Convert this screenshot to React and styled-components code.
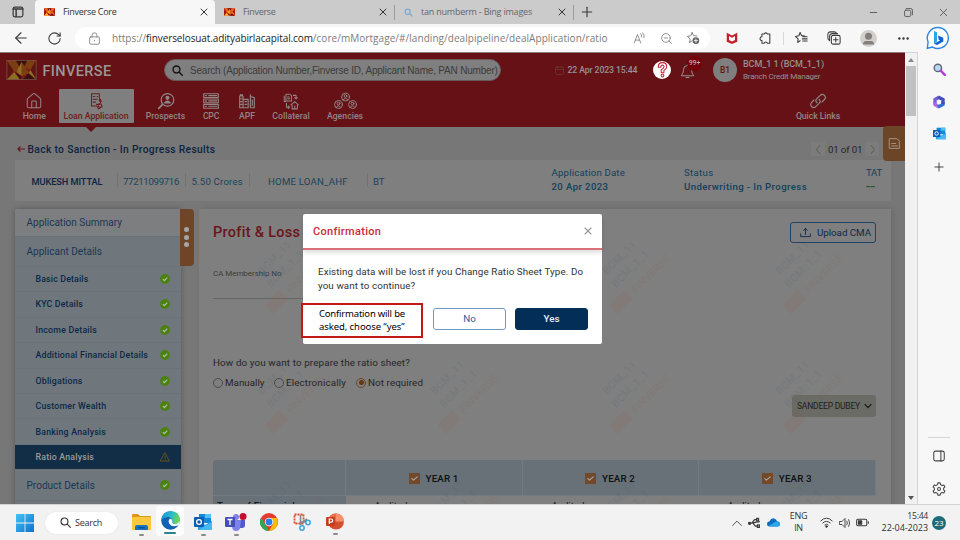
import React from 'react';
import styled, { createGlobalStyle, css } from 'styled-components';
import {
  LuArrowLeft, LuRotateCw, LuZoomOut, LuPlus, LuX, LuMinus, LuHouse,
} from 'react-icons/lu';

const rubik = 'Roboto, "Open Sans", sans-serif';
const segoe = '"Open Sans", "Noto Sans", sans-serif';

const GlobalStyle = createGlobalStyle`
  * { box-sizing: border-box; }
  body { margin: 0; font-family: ${rubik}; overflow: hidden; }
  svg { display: block; flex: none; }
`;

const type = css`
  font-size: ${p => p.$size || 9.6}px;
  letter-spacing: ${p => p.$ls || 0}px;
  white-space: nowrap;
`;

const Screen = styled.div`
  width: 960px; height: 540px; display: flex; flex-direction: column; overflow: hidden; background: #f7f7f7;
`;

/* Browser chrome */
const TabStrip = styled.div`
  height: 24px; flex: none; display: flex; background: #cbcbcb; color: #5a5a5a; font-family: ${segoe};
`;
const Cell = styled.div`
  width: ${p => p.$w}px; flex: none; display: flex; align-items: center; justify-content: center; color: ${p => p.$c || '#3b3b3b'};
`;
const Tab = styled.div`
  width: ${p => p.$w || 179}px; display: flex; align-items: center; padding: 0 5px 0 9px; gap: 8px;
  background: ${p => (p.$active ? '#f7f7f7' : 'transparent')};
  color: ${p => (p.$active ? '#333' : '#666')};
  border-radius: 4px 4px 0 0;
`;
const TabTitle = styled.span`${type} flex: 1; line-height: 24px;`;
const TabRule = styled.i`width: 1px; height: 15px; margin-top: 5px; background: #9b9b9b;`;
const Spring = styled.div`flex: 1;`;
const Toolbar = styled.div`height: 28px; flex: none; display: flex; align-items: center; color: #3b3b3b;`;
const Address = styled.div`
  width: 635px; height: 22.5px; margin-left: 9px; border-radius: 12px; background: #fff;
  display: flex; align-items: center; padding-left: 13px; font-family: ${segoe};
`;
const Url = styled.span`${type} color: ${p => (p.$host ? '#222' : '#7c7c7c')}; line-height: 20px;`;
const UrlBox = styled.div`display: flex; width: 513px; margin-left: 11px;`;
const ToolRule = styled.i`width: 1px; height: 13px; background: #d8d8d8;`;
const Avatar = styled.div`
  width: 17px; height: 17px; border-radius: 50%; background: #d3d0cc; overflow: hidden;
`;

const Middle = styled.div`height: 452px; flex: none; display: flex;`;
const Viewport = styled.div`
  position: relative; width: 905px; height: 452px; overflow: hidden; background: #777;
  border-top: 1px solid #8d7b7c; display: flex; flex-direction: column;
`;
const Scroll = styled.div`
  width: 13px; background: #f1f1f1; border-right: 1px solid #d5d5d5; border-top: 1px solid #d5d5d5;
  display: flex; flex-direction: column; align-items: center; padding: 5px 0 4px;
`;
const Thumb = styled.div`width: 10px; height: 50px; margin-top: 4px; background: #c1c1c1;`;
const SideRail = styled.div`width: 42px; display: flex; flex-direction: column; align-items: center; color: #444;`;
const RailItem = styled.div`height: ${p => p.$h}px; display: flex; align-items: center; justify-content: center;`;
const RailRule = styled.i`width: 22px; height: 1px; background: #d5d5d5;`;

/* App header */
const Header = styled.header`height: 74px; flex: none; background: #651115; color: #979191; display: flex; flex-direction: column;`;
const HeaderTop = styled.div`height: 33px; display: flex; align-items: center; padding-left: 6px;`;
const Brand = styled.span`${type} font-weight: 500; width: 121px; margin-left: 5.5px; padding-top: 3px; color: #9b9797;`;
const SearchBox = styled.div`
  width: 337px; height: 22px; margin-top: 1px; border-radius: 11px; background: #7f7f7f; border: 1px solid #6a5a5b; display: flex; align-items: center;
  padding-left: 7px; gap: 7.5px; color: #3c3c3c; font-family: "Liberation Sans", Arial, sans-serif;
`;
const Plain = styled.span`${type} font-weight: ${p => p.$bold ? 500 : 400};`;
const DateBox = styled.div`display: flex; align-items: center; gap: 4px; margin-left: 54px; width: 98.5px; padding-top: 1px;`;
const Help = styled.div`width: 18px; height: 18px; border-radius: 50%; background: #fff; display: flex; align-items: center; justify-content: center;`;
const Bell = styled.div`position: relative; margin-left: 9px; width: 33px;`;
const BellCount = styled.span`
  position: absolute; left: 7px; top: -5px; width: 15px; height: 15px; border-radius: 50%; background: #760009; color: #aaa;
  font-size: 7px; line-height: 14px; text-align: center; font-weight: 500; letter-spacing: -.1px;
`;
const UserDot = styled.div`
  width: 24px; height: 24px; border-radius: 50%; background: #7f7f7f; color: #651115; font-size: 8.5px; font-weight: 500;
  display: flex; align-items: center; justify-content: center;
`;
const UserText = styled.div`display: flex; flex-direction: column; margin-left: 6px; gap: 1px; line-height: 11px; padding-top: 1.5px;`;
const Nav = styled.nav`height: 41px; display: flex; padding: 3px 0 4px 10px;`;
const NavItem = styled.div`
  width: ${p => p.$w}px; display: flex; flex-direction: column; align-items: center; padding-top: 2.5px; position: relative;
  background: ${p => (p.$on ? '#7f7f7f' : 'transparent')}; color: ${p => (p.$on ? '#6c1d21' : '#918585')};
  border-radius: 1px;
`;
const NavLabel = styled.span`${type} font-weight: 500; line-height: 12px; margin-top: .5px;`;
const Pointer = styled.i`
  position: absolute; top: 37.5px; left: 27px; border: 5px solid transparent; border-top-color: #651115; border-bottom: 0;
`;

/* Deal summary */
const BackRow = styled.div`
  height: 33px; flex: none; display: flex; align-items: center; padding: 11px 0 0 17px; color: #0f2440;
`;
const BackText = styled(Plain)`flex: 1; margin-left: 2.5px;`;
const Pager = styled.div`display: flex; align-items: center; gap: 3px; width: 68px; margin-right: 26px; color: #262626;`;
const PagerButton = styled.i`width: 14px; height: 14px; flex: none; background: #7c7c7c; display: flex; align-items: center; justify-content: center;`;
const InfoCard = styled.div`
  width: 876px; height: 41px; flex: none; margin-left: 14.5px; background: #7f7f7f; display: flex; align-items: center; color: #1a445e;
`;
const InfoCell = styled.div`
  width: ${p => p.$w}px; height: 14px; line-height: 13px; padding-left: ${p => p.$pad || 0}px; margin-top: -2px;
  border-left: 1px solid ${p => (p.$rule ? '#727272' : 'transparent')}; color: ${p => p.$c || 'inherit'};
`;
const InfoPair = styled.div`width: ${p => p.$w}px; display: flex; flex-direction: column; gap: 1px; line-height: 13px; margin-top: -2px; color: #123f5c;`;
const Good = styled.b`color: #2b5425; font-weight: 400; line-height: 13px;`;

const Columns = styled.div`flex: 1; display: flex; align-items: flex-start; padding: 7.5px 0 0 14.5px;`;
const Menu = styled.div`width: 166px; height: 320px; flex: none; box-shadow: 0 0 6px rgba(0,0,0,.25); background: #6f757a;`;
const MenuRow = styled.div`
  height: ${p => p.$h || 25.45}px; display: flex; align-items: center; justify-content: space-between;
  padding: 0 11px 0 ${p => (p.$sub ? 21 : 12)}px; border-bottom: 1px solid #6b7378;
  background: ${p => (p.$on ? '#112e46' : p.$top ? '#7d7e7f' : '#70777c')};
  color: ${p => (p.$on ? '#9a9a9a' : p.$sub ? '#0d2848' : '#1a3655')};
`;
const Handle = styled.div`
  width: 14.5px; height: 57px; flex: none; background: #6e4527; border-radius: 0 4px 4px 0; margin-left: -1px;
  display: flex; flex-direction: column; align-items: center; justify-content: center; gap: 2.5px;
`;
const Dot = styled.i`width: 5px; height: 5px; border-radius: 50%; background: #a6a6a6;`;
const Card = styled.main`
  width: 692px; height: 320px; margin-left: 4.5px; background: #7f7f7f; box-shadow: 2px 0 6px rgba(0,0,0,.12);
  padding: 13.5px 14.5px 0; display: flex; flex-direction: column; color: #262626;
`;
const TitleRow = styled.div`height: 21px; flex: none; display: flex; justify-content: space-between; align-items: center; color: #6b141b;`;
const Upload = styled.div`
  width: 86px; height: 21px; border: 1px solid #1f4265; border-radius: 3px; color: #10294a;
  display: flex; align-items: center; padding-left: 9px; gap: 6px;
`;
const Field = styled.div`width: 150px; height: 35px; flex: none; margin-top: 21px; line-height: 12px; padding-top: 1px; border-bottom: 1px solid #656565; color: #3d3d3d;`;
const Question = styled.div`margin-top: 55px; height: 14px; flex: none; line-height: 14px;`;
const Radios = styled.div`display: flex; margin-top: 7.5px; height: 14px; flex: none; line-height: 14px;`;
const RadioItem = styled.div`width: ${p => p.$w}px; display: flex; align-items: center; gap: 2px;`;
const Ring = styled.i`
  width: 10px; height: 10px; border-radius: 50%; border: 1px solid ${p => (p.$on ? '#6b482c' : '#4c4c4c')};
  display: flex; align-items: center; justify-content: center;
  &::after { content: ''; width: 5px; height: 5px; border-radius: 50%; background: ${p => (p.$on ? '#65380f' : 'transparent')}; }
`;
const Select = styled.div`
  width: 84px; height: 22px; flex: none; margin-top: 5px; align-self: flex-end; border-radius: 3px; background: #6b6b65; color: #202020;
  display: flex; align-items: center; justify-content: space-between; padding: 0 4px 0 5px;
`;
const Table = styled.div`
  margin-top: 43px; height: 76px; flex: none; display: grid; grid-template-columns: 132.5px 177px 176px 1fr; grid-template-rows: 36px 40px; border-radius: 3px 3px 0 0; overflow: hidden;
`;
const Th = styled.div`
  background: #687178; border-right: 1px solid #747b80; border-bottom: 1px solid #747b80; color: #101010;
  display: flex; align-items: center; justify-content: center; gap: 6px; font-weight: 500; padding-top: 2px;
`;
const Check = styled.i`width: 11px; height: 11px; background: #74492a; display: flex; align-items: center; justify-content: center;`;
const Td = styled.div`
  ${type} padding: 4px 0 0 ${p => (p.$head ? 4 : 29)}px; line-height: 12px; color: #181818;
  background: ${p => (p.$head ? '#687178' : '#7f7f7f')}; font-weight: ${p => (p.$head ? 500 : 400)};
`;
const NotesTab = styled.div`
  position: absolute; right: 0; top: 73px; width: 22px; height: 35px; border-radius: 4px 0 0 4px; background: #6c4527;
  display: flex; align-items: center; justify-content: center;
`;
const Watermarks = styled.div`
  position: absolute; left: 250px; top: 185px; display: grid; grid-template-columns: repeat(4, 172.7px); grid-auto-rows: 120px;
  opacity: .09; pointer-events: none;
`;

/* Confirmation dialog */
const Modal = styled.div`
  position: absolute; left: 303px; top: 161px; width: 299px; height: 129.5px; background: #fff; border-radius: 2px; color: #333;
`;
const ModalHead = styled.div`
  height: 36px; display: flex; align-items: center; justify-content: space-between; padding: 0 8px 0 10px; color: #cb2a35;
  box-shadow: 0 3px 4px rgba(0,0,0,.12); border-bottom: 2px solid #dc7078;
`;
const ModalText = styled.p`${type} margin: 15px 0 0 15px; line-height: 14.3px;`;
const Actions = styled.div`display: flex; gap: 9px; padding: 14px 0 0 130px;`;
const Button = styled.button`
  width: 73px; height: 22px; border-radius: 3px; padding: 0 0 1px; font-family: inherit; font-size: 9.8px; letter-spacing: 0;
  border: 1px solid ${p => (p.$primary ? '#022e57' : '#6f9ac4')}; background: ${p => (p.$primary ? '#022e57' : '#fff')};
  color: ${p => (p.$primary ? '#e8eef4' : '#2c5e97')}; font-weight: ${p => (p.$primary ? 500 : 400)};
`;
const Callout = styled.div`
  position: absolute; left: -2px; top: 89px; width: 122px; height: 35px; border: 2px solid #c21818; background: #fff; color: #000;
  display: flex; flex-direction: column; justify-content: center; padding-left: 16px; line-height: 12.3px; font-family: "Noto Sans", "Open Sans", sans-serif;
`;

/* Taskbar */
const Taskbar = styled.footer`height: 36px; flex: none; background: #f2f2f2; border-top: 1px solid #d2d2d2; display: flex; align-items: center; padding-left: 4px; font-family: ${segoe}; color: #333;`;
const SearchPill = styled.div`width: 73px; height: 22px; border-radius: 11px; background: #fff; box-shadow: 0 0 1px #ccc; display: flex; align-items: center; gap: 4px; padding-left: 15px; margin-right: 5px;`;
const TaskItem = styled.div`
  width: ${p => p.$w || 33}px; height: 35px; display: flex; flex-direction: column; align-items: center; padding-top: 8px; gap: 3px;
`;
const ActiveTask = styled.div`
  width: 28px; height: 30px; margin: 1px 2.5px 0 1px; border-radius: 3px; background: #fcfcfc; display: flex; flex-direction: column; align-items: center; padding-top: 5px; gap: 2px;
`;
const Running = styled.i`width: ${p => (p.$wide ? 12 : 5)}px; height: 2px; border-radius: 1px; background: ${p => (p.$wide ? '#2b8391' : '#8b8b8b')};`;
const Stack = styled.div`width: ${p => p.$w}px; display: flex; flex-direction: column; line-height: 12px; align-items: ${p => p.$align || 'center'}; margin-top: -1px;`;
const Count = styled.div`width: 14px; height: 14px; margin-left: 4px; border-radius: 50%; background: #1d6b7a; color: #fff; font-size: 8px; display: flex; align-items: center; justify-content: center;`;
const PinnedApps = styled.div`display: flex; margin-left: 4px;`;

const S = ({ w = 16, h = w, vb = '0 0 16 16', sw = 1, children }) => (
  <svg width={w} height={h} viewBox={vb} fill="none" stroke="currentColor" strokeWidth={sw} strokeLinecap="round" strokeLinejoin="round">{children}</svg>
);

const Logo = ({ w = 30, h = 20, dim }) => {
  const c = dim ? ['#5b1410', '#7b3d12', '#8b6d24', '#7c1c12', '#3b0f0d'] : ['#a51712', '#e5601c', '#f8b52c', '#cf2817', '#741009'];
  return (
    <svg width={w} height={h} viewBox="0 0 30 20" stroke="none">
      <rect width="30" height="20" fill={c[3]} />
      <path d="M0 0L8 9L0 20Z" fill={c[0]} />
      <path d="M0 0H9L15 10L8 12Z" fill={c[1]} />
      <path d="M9 0H21L15 10Z" fill={c[4]} />
      <path d="M15 2L22 13L15 16L10 12Z" fill={c[2]} />
      <path d="M15 2V16L22 13Z" fill={c[1]} />
      <path d="M21 0H30L24 10L18 7Z" fill={c[1]} />
      <path d="M30 0V20L24 10Z" fill={c[0]} />
      <path d="M0 20L8 12L14 20Z" fill={c[2]} />
      <path d="M8 12L15 16L14 20Z" fill={c[4]} />
      <path d="M16 20L22 13L30 20Z" fill={c[4]} />
      <path d="M22 13L24 10L30 20Z" fill={c[2]} />
      {dim && <rect x=".4" y=".4" width="29.2" height="19.2" fill="none" stroke="#75504b" strokeWidth=".8" />}
    </svg>
  );
};

const Bing = () => (
  <svg width="24" height="24" viewBox="0 0 24 24" fill="none">
    <path d="M12 1.5a10.5 10.5 0 1 1-5.4 19.6L1.3 22.3L2.1 16A10.5 10.5 0 0 1 12 1.5Z" fill="#fff" stroke="#2f86e0" strokeWidth="1.4" />
    <path d="M8 5l3 1.2v9.3l-3 2.6Z" fill="#2aa5ea" />
    <path d="M12 9.4l5.3 2.4v3.6L11 19l-3-1.2 6-3.3-1.3-.8Z" fill="#1462d2" />
  </svg>
);
const Done = () => (
  <svg width="10" height="10" viewBox="0 0 10 10" fill="none"><circle cx="5" cy="5" r="4.9" fill="#4b820f" /><path d="M2.9 5.1L4.4 6.6L7.2 3.6" stroke="#b4b9ac" strokeWidth="1.3" /></svg>
);
const Star = () => <path d="M7 1.8L8.6 5.3L12.4 5.7M4.2 13l.5-4L1.6 6.2l3.9-.8L7 1.8M4.2 13L7 11.2" />;
const Person = ({ x, y, r = 3.2 }) => <g transform={`translate(${x} ${y})`}><circle r={r} /><circle cy={-r * .25} r={r * .35} /><path d={`M${-r * .6} ${r * .75}Q0 ${-r * .2} ${r * .6} ${r * .75}`} /></g>;

const navItems = [
  ['Home', 48.5, -.1, <LuHouse size={18} strokeWidth={1.4} />],
  ['Loan Application', 75, -.02, <S w={18} sw={.9}><path d="M4 1.500h7v6M4 1.500v11h4.500M5.500 4h1.500M9 4h.5M5.500 6.500h3.500M5.500 9h2M8.500 11h3M9 13l1.500 2 3-2M12 10V6.500M11 8h2" /><circle cx="11.500" cy="12" r="1.600" /></S>],
  ['Prospects', 64, 0, <S w={18} sw={1.1}><circle cx="9.300" cy="7" r="5.600" /><path d="M5 11L1.500 14.500" strokeWidth="1.600" /><path d="M6.800 9.700Q9.300 6.500 11.800 9.700Z" fill="currentColor" /><circle cx="9.300" cy="5.200" r="1.300" fill="currentColor" /></S>],
  ['CPC', 27, -.25, <S w={18} sw={1}><path d="M1.500 1.500h13v3.400h-13ZM1.500 6.200h13v3.400h-13ZM1.500 11h13v3.400h-13ZM3 3.200h1M6 3.200h7M3 7.900h1M6 7.900h7M3 12.700h1M6 12.700h7" /></S>],
  ['APF', 45, 0, <S w={18} sw={1}><path d="M1.500 14V3.500h3V14ZM4.500 14V6.500h4.500v7.500ZM11 14V4l3.500 1v9ZM2 3.500v-1h2v1M2.500 6h1M2.500 8.500h1M2.500 11h1M6.200 8.500h1.400M6.200 11h1.400M12.700 7v5M11 4V2.500" /></S>],
  ['Collateral', 43, .02, <S w={18} sw={.9}><path d="M3.500 2h3.500l1.500 1.500V8h-5ZM2 3.500v5h1.500M5 4.500h1.500M5 6h2M10 3h2.500v3M11.300 5l1.200 1.200L13.700 5M4 10v3.500h2.500M5.500 12.300l1.200 1.200-1.200 1.200M8 11.500l3.300-3 3.200 3M9 11.500V15h4.700v-3.500M11.300 12.500V15" /></S>],
  ['Agencies', 65, .02, <S w={25} h={18} vb="0 0 25 18" sw={1}><Person x={12.5} y={5} r={3.9} /><Person x={5.5} y={12.500} r={3.9} /><Person x={19.5} y={12.500} r={3.9} /></S>],
];

const menu = [
  ['Basic Details', .15], ['KYC Details', .15], ['Income Details', .2], ['Additional Financial Details', .2],
  ['Obligations', .2], ['Customer Wealth', .2], ['Banking Analysis', .2], ['Ratio Analysis', .19],
];

const WatermarkCell = () => (
  <svg width="90" height="90" viewBox="0 0 90 90" fontSize="10.5" fill="#24406b">
    <text transform="translate(12 37) rotate(-45)" letterSpacing=".6">BCM_11</text>
    <text transform="translate(21 50) rotate(-45)" letterSpacing=".6">BCM_1_1</text>
    <g fill="#a03c33">
      <text transform="translate(41 56) rotate(-45)" letterSpacing=".3">FINVERSE</text>
      <path d="M15 67L29 52L38 61L23 76Z" fill="#a0522d" />
    </g>
  </svg>
);

function BrowserTop() {
  return (
    <>
      <TabStrip>
        <Cell $w={35}><S w={12} sw={1.6}><rect x="1.5" y="1.5" width="13" height="13" rx="2.5" /><path d="M1.5 4h13M5.5 4v10" strokeWidth="2" /></S></Cell>
        <Tab $active $w={180}><Logo w={11} h={8} /><TabTitle $size={9} $ls={-.28}>Finverse Core</TabTitle><LuX size={12} color="#333" /></Tab>
        <Tab><Logo w={11} h={8} /><TabTitle $size={9} $ls={-.31}>Finverse</TabTitle><LuX size={12} color="#333" /></Tab>
        <TabRule />
        <Tab $w={178}><S w={9} sw={2}><g stroke="#78a8d0"><circle cx="6.5" cy="6.5" r="4.5" /><path d="M10 10l4.5 4.5" /></g></S><TabTitle $size={9} $ls={-.21}>tan numberm - Bing images</TabTitle><LuX size={12} color="#333" /></Tab>
        <TabRule />
        <Cell $w={26}><LuPlus size={16} strokeWidth={1.7} /></Cell>
        <Spring />
        <Cell $w={34} $c="#555"><LuMinus size={11} /></Cell>
        <Cell $w={36} $c="#555"><S w={9} sw={1.6}><rect x="1" y="4" width="11" height="11" rx="2" /><path d="M4 1h8q3 0 3 3v8" /></S></Cell>
        <Cell $w={34} $c="#555"><LuX size={13} strokeWidth={1.6} /></Cell>
      </TabStrip>
      <Toolbar>
        <Cell $w={42}><LuArrowLeft size={18} strokeWidth={1.5} /></Cell>
        <Cell $w={24}><LuRotateCw size={15} strokeWidth={1.7} /></Cell>
        <Address>
          <S w={13} sw={1}><g stroke="#777"><rect x="2" y="6" width="12" height="9" rx="1.5" /><path d="M5 6V4a3 3 0 0 1 6 0v2M8 10v1" /></g></S>
          <UrlBox>
            <Url $size={10}>https://</Url>
            <Url $size={10} $ls={-.11} $host>finverselosuat.adityabirlacapital.com</Url>
            <Url $size={10} $ls={.05}>/core/mMortgage/#/landing/dealpipeline/dealApplication/ratio</Url>
          </UrlBox>
          <Cell $w={28} $c="#7c7c7c"><S w={13} sw={1}><path d="M1.5 13.5L5.5 3l4 10.5M3 10h5M9.5 2q1.5 1.5 1 4M12 1q2.5 2.5 1.5 6" /></S></Cell>
          <Cell $w={26} $c="#8a8a8a"><LuZoomOut size={13} strokeWidth={1.7} /></Cell>
          <Cell $w={28} $c="#777"><S w={14}><Star /><circle cx="11.3" cy="11" r="3.8" fill="#666" stroke="none" /><path d="M11.3 9.2v3.6M9.5 11h3.6" stroke="#fff" /></S></Cell>
        </Address>
        <Cell $w={44}><S w={12} sw={0}><path d="M1 1l7 3.7L15 1v12l-7 3-7-3Z" fill="#c3202c" /><path d="M4 5.3l4 2.2 4-2.2v5.5l-4 1.8-4-1.8Z" fill="#f7f7f7" /></S></Cell>
        <Cell $w={22}><S w={14} sw={1.2}><path d="M4.500 3.500H7a2 2 0 0 1 3.800 0H13.500V14H10.800a2 2 0 0 0-3.800 0H4.500v-3a2.200 2.200 0 0 1 0-4.400Z" /></S></Cell>
        <Cell $w={14}><ToolRule /></Cell>
        <Cell $w={22}><S w={14} sw={1.2}><Star /><path d="M10 6.5h5M9.5 9h5.5M10 11.5h5" /></S></Cell>
        <Cell $w={44}><S w={14} sw={1.2}><rect x="5" y="5" width="10" height="10" rx="2" /><path d="M10 7.5v5M7.5 10h5M3 11Q1 10 1 8V4q0-3 3-3h4q2.500 0 3 2M3 11V6q0-3 3-3h6" /></S></Cell>
        <Cell $w={24}><Avatar><svg width="17" height="17" viewBox="0 0 17 17"><circle cx="8.500" cy="6.200" r="3.500" fill="#827f7c" /><path d="M3 14.500q0-3.500 3-3.500h5q3 0 3 3.500Z" fill="#827f7c" /></svg></Avatar></Cell>
        <Cell $w={46}><S w={11} sw={0}><g fill="#333"><circle cx="2" cy="8" r="1.700" /><circle cx="8" cy="8" r="1.700" /><circle cx="14" cy="8" r="1.700" /></g></S></Cell>
        <Cell $w={24}><Bing /></Cell>
      </Toolbar>
    </>
  );
}

function AppHeader() {
  return (
    <Header>
      <HeaderTop>
        <Logo w={31} h={20} dim />
        <Brand $size={14.5} $ls={.37}>FINVERSE</Brand>
        <SearchBox>
          <S w={11} sw={2}><g stroke="#111"><circle cx="6.500" cy="6.500" r="5" /><path d="M10.500 10.500L15 15" /></g></S>
          <Plain $size={10} $ls={-.2}>Search (Application Number,Finverse ID, Applicant Name, PAN Number)</Plain>
        </SearchBox>
        <DateBox>
          <S w={9} sw={1.3}><g stroke="#713a31"><rect x="1" y="2" width="14" height="13" rx="2" /><path d="M1 6h14M5 .5v3M11 .5v3" /></g></S>
          <Plain $size={8.7} $ls={-.11} $bold>22 Apr 2023 15:44</Plain>
        </DateBox>
        <Help><S w={17} sw={1}><g stroke="#c52532"><path d="M4 5.800Q4 1.500 8 1.500T12 5.500Q12 7.500 9.300 9v2H6.800V8.200Q9.500 6.700 9.500 5.400T8 3.900T6.400 5.800Z" /><circle cx="8" cy="13.700" r="1.300" /></g></S></Help>
        <Bell>
          <S w={15} h={18} vb="0 0 15 18" sw={1}><path d="M1.500 14.500Q3.500 12.500 3.500 8.500q0-4 4-4t4 4q0 4 2 6ZM6 16.500h3M7.500 4.500v-2" /></S>
          <BellCount>99+</BellCount>
        </Bell>
        <UserDot>B1</UserDot>
        <UserText><Plain $size={9} $bold $ls={-.07}>BCM_1 1 (BCM_1_1)</Plain><Plain $size={8} $ls={-.2}>Branch Credit Manager</Plain></UserText>
      </HeaderTop>
      <Nav>
        {navItems.map(([label, w, ls, icon], i) => (
          <NavItem key={label} $w={w} $on={i === 1}>{icon}<NavLabel $size={8.7} $ls={ls}>{label}</NavLabel>{i === 1 && <Pointer />}</NavItem>
        ))}
        <Spring />
        <NavItem $w={174}><S w={18} sw={1.100}><path d="M7 9.500a2.600 2.600 0 0 1 0-3.600L10 3a2.600 2.600 0 0 1 3.700 3.700L11.500 9M9 6.500a2.600 2.600 0 0 1 0 3.600L6 13a2.600 2.600 0 0 1-3.700-3.700L4.500 7" /></S><NavLabel $size={8.800} $ls={-.12}>Quick Links</NavLabel></NavItem>
      </Nav>
    </Header>
  );
}

function DealSummary() {
  return (
    <>
      <BackRow>
        <S w={8} h={6} vb="0 0 8 6" sw={1.200}><path d="M7.500 3H1M3 1L1 3l2 2" stroke="#6b141b" /></S>
        <BackText $size={10.300} $ls={.32} $bold>Back to Sanction - In Progress Results</BackText>
        <Pager>
          <PagerButton><S w={11} sw={1.300}><path d="M10 2L5 8l5 6" stroke="#55583f" /></S></PagerButton>
          <Plain $size={9.700} $ls={-.15}>01 of 01</Plain>
          <PagerButton><S w={11} sw={1.300}><path d="M6 2l5 6-5 6" stroke="#55583f" /></S></PagerButton>
        </Pager>
      </BackRow>
      <InfoCard>
        <InfoCell $w={102} $pad={16} $c="#0d2444"><Plain $size={9.200} $bold $ls={-.07}>MUKESH MITTAL</Plain></InfoCell>
        <InfoCell $w={68.500} $pad={5.500} $rule><Plain $size={9.600} $ls={-.3}>77211099716</Plain></InfoCell>
        <InfoCell $w={64} $pad={5.500} $rule><Plain $ls={.2}>5.50 Crores</Plain></InfoCell>
        <InfoCell $w={117.500} $pad={18} $rule><Plain $ls={.22}>HOME LOAN_AHF</Plain></InfoCell>
        <InfoCell $w={185} $pad={5.500} $rule><Plain>BT</Plain></InfoCell>
        <InfoPair $w={132.500}><Plain $ls={.2}>Application Date</Plain><Plain $bold $ls={.4}>20 Apr 2023</Plain></InfoPair>
        <InfoPair $w={182}><Plain $ls={.34}>Status</Plain><Plain $bold $ls={.42}>Underwriting - In Progress</Plain></InfoPair>
        <InfoPair $w={20}><Plain $ls={-.3}>TAT</Plain><Good>--</Good></InfoPair>
      </InfoCard>
    </>
  );
}

function SideMenu() {
  return (
    <Menu>
      <MenuRow $h={28} $top><Plain $size={10} $ls={.01}>Application Summary</Plain></MenuRow>
      <MenuRow $h={30.300}><Plain $size={10} $ls={.02}>Applicant Details</Plain></MenuRow>
      {menu.map(([t, ls], i) => (
        <MenuRow key={t} $sub $on={i === 7}>
          <Plain $size={8.800} $ls={ls} $bold>{t}</Plain>
          {i === 7 ? <S w={10} sw={1.300}><path d="M8 1.500L15 14.500H1ZM8 6v4M8 12v.5" stroke="#74591b" /></S> : <Done />}
        </MenuRow>
      ))}
      <MenuRow $h={31}><Plain $size={10} $ls={.03}>Product Details</Plain><Done /></MenuRow>
    </Menu>
  );
}

function ProfitLoss() {
  return (
    <Card>
      <TitleRow>
        <Plain $size={14.500} $bold $ls={.29}>Profit &amp; Loss</Plain>
        <Upload>
          <S w={11} sw={1.300}><path d="M8 11V2M5 5l3-3 3 3M1 10v4h14v-4" /></S>
          <Plain $size={9.800} $ls={-.05}>Upload CMA</Plain>
        </Upload>
      </TitleRow>
      <Field><Plain $size={8} $ls={-.05}>CA Membership No</Plain></Field>
      <Question><Plain $size={9.800} $ls={.13}>How do you want to prepare the ratio sheet?</Plain></Question>
      <Radios>
        <RadioItem $w={61}><Ring /><Plain $size={9.800}>Manually</Plain></RadioItem>
        <RadioItem $w={82}><Ring /><Plain $size={9.800} $ls={.15}>Electronically</Plain></RadioItem>
        <RadioItem $w={80}><Ring $on /><Plain $size={9.800} $ls={.09}>Not required</Plain></RadioItem>
      </Radios>
      <Select><Plain $size={8.500} $ls={-.21}>SANDEEP DUBEY</Plain><S w={8} sw={2.500}><path d="M2 5l6 6 6-6" /></S></Select>
      <Table>
        <Th />
        {[1, 2, 3].map(n => (
          <Th key={n}><Check><S w={9} sw={1.800}><path d="M3 8l3 3 7-6" stroke="#aaa" /></S></Check><Plain $size={9.800} $bold $ls={.1}>YEAR {n}</Plain></Th>
        ))}
        <Td $head $ls={.3}>Type of Financials</Td>
        <Td>Audited</Td><Td>Audited</Td><Td>Audited</Td>
      </Table>
    </Card>
  );
}

function Confirmation() {
  return (
    <Modal>
      <ModalHead><Plain $size={11} $bold $ls={.32}>Confirmation</Plain><LuX size={12} strokeWidth={2.200} color="#999" /></ModalHead>
      <ModalText $size={9.800} $ls={.1}>Existing data will be lost if you Change Ratio Sheet Type. Do<br />you want to continue?</ModalText>
      <Actions><Button>No</Button><Button $primary>Yes</Button></Actions>
      <Callout><Plain $size={9.500} $ls={-.2}>Confirmation will be</Plain><Plain $size={9.500} $ls={-.08}>asked, choose “yes”</Plain></Callout>
    </Modal>
  );
}

const Outlook = ({ s = 18 }) => (
  <svg width={s} height={s} viewBox="0 0 18 18"><path d="M5 1h12v9H5Z" fill="#1489dc" /><path d="M11 1h6v4h-6Z" fill="#4fc3f5" /><path d="M4 8l7 4 7-4v9H4Z" fill="#1aa0ec" /><path d="M4 17l14-8v8Z" fill="#46b8f2" /><rect y="4" width="10" height="10" rx="1" fill="#0a5eb5" /><circle cx="5" cy="9" r="2.400" fill="none" stroke="#fff" strokeWidth="1.300" /></svg>
);

function Tasks() {
  return (
    <Taskbar>
      <Cell $w={41}><svg width="18" height="18" viewBox="0 0 18 18"><defs><linearGradient id="win" x1="0" y1="0" x2="1" y2="1"><stop stopColor="#45c4f4" /><stop offset="1" stopColor="#0b73d0" /></linearGradient></defs><path d="M0 0h8.600v8.600H0ZM9.400 0H18v8.600H9.400ZM0 9.400h8.600V18H0ZM9.400 9.400H18V18H9.400Z" fill="url(#win)" /></svg></Cell>
      <SearchPill><S w={11} sw={1.600}><circle cx="6.500" cy="6.500" r="5" /><path d="M10.500 10.500L15 15" /></S><Plain $size={9} $ls={-.25}>Search</Plain></SearchPill>
      <PinnedApps>
        <TaskItem $w={28}><svg width="19" height="18" viewBox="0 0 19 18"><path d="M0 2q0-1 1-1h5l2 2h10q1 0 1 1v12q0 1-1 1H1q-1 0-1-1Z" fill="#d99a16" /><rect y="4" width="19" height="13" rx="1" fill="#fcc93c" /><path d="M3 17v-3q0-2 2-2h9q2 0 2 2v3Z" fill="#1573c4" /><path d="M6 14h7v1.500H6Z" fill="#0a4f96" /></svg><Running /></TaskItem>
        <ActiveTask>
          <svg width="19" height="19" viewBox="0 0 19 19"><defs><linearGradient id="edge" x1="0" y1="0" x2="1" y2=".3"><stop stopColor="#168fd5" /><stop offset=".6" stopColor="#29bccb" /><stop offset="1" stopColor="#67d854" /></linearGradient></defs><circle cx="9.500" cy="9.500" r="9.300" fill="#1262b4" /><path d="M.4 8.500Q1.500.2 9.500.2q9 0 9.300 8.300 0 4.300-4.300 4.500-3.200 0-3-2.200Q11.500 6 7 6 3 6 .4 8.500Z" fill="url(#edge)" /><path d="M9 7.500q-2.500 2.500-.5 5.500 2.500 3.500 8.500 1.500l1-1 .8-4.500q-1.500 4-4.300 4-3.500 0-3.200-2.300Q11.500 8 9 7.500Z" fill="#f4fbff" /></svg><Running $wide />
        </ActiveTask>
        <TaskItem><Outlook /><Running /></TaskItem>
        <TaskItem><svg width="22" height="18" viewBox="0 0 22 18"><circle cx="11" cy="4" r="3" fill="#7b83eb" /><path d="M7 7h9v6q-1 5-5 5t-4-5Z" fill="#7b83eb" /><path d="M16 7h4v5q0 3-3 3h-2Z" fill="#5059c9" /><rect y="4" width="10" height="10" rx="1" fill="#464eb8" /><path d="M2.500 6.500h5M5 6.500v5.500" stroke="#fff" strokeWidth="1.300" /><circle cx="18" cy="3.500" r="3.500" fill="#c50f2f" /></svg><Running /></TaskItem>
        <TaskItem><svg width="18" height="18" viewBox="0 0 18 18"><circle cx="9" cy="9" r="9" fill="#e33b2e" /><path d="M1.200 4.500L5.100 11.300L9 18A9 9 0 0 1 1.200 4.500Z" fill="#2da94f" /><path d="M9 5h7.800A9 9 0 0 1 9 18l3.900-6.700Z" fill="#fdbd00" /><circle cx="9" cy="9" r="4.200" fill="#fff" /><circle cx="9" cy="9" r="3.400" fill="#2b7de9" /></svg></TaskItem>
        <TaskItem><svg width="18" height="18" viewBox="0 0 18 18" fill="none"><rect x="1.500" y="1.500" width="9" height="9" stroke="#dd4a2c" strokeWidth="1.800" strokeDasharray="2 1" /><path d="M7.500 2v10M7 11l7-5M7 9h6" stroke="#888" strokeWidth="1.600" /><circle cx="15" cy="9.500" r="2.200" stroke="#35a6df" strokeWidth="1.500" /><circle cx="9" cy="15" r="2.200" stroke="#35a6df" strokeWidth="1.500" /></svg></TaskItem>
        <TaskItem><svg width="18" height="17" viewBox="0 0 18 17"><circle cx="10" cy="8.500" r="8" fill="#d3502f" /><path d="M10 .5a8 8 0 0 1 8 8h-8Z" fill="#ff8f6b" /><path d="M10 .5v8H2a8 8 0 0 1 8-8Z" fill="#ed6c47" /><rect y="4" width="9" height="9" rx="1" fill="#c43e1c" /><path d="M3.300 11V6h1.800a1.500 1.500 0 0 1 0 3.200H3.300" fill="none" stroke="#fff" strokeWidth="1.200" /></svg><Running /></TaskItem>
      </PinnedApps>
      <Spring />
      <Cell $w={20}><S w={10} sw={1.400}><path d="M1 12l7-7 7 7" /></S></Cell>
      <Cell $w={16}><S w={13} sw={1.500}><path d="M2 9L14 7M5 8.500l3-4h3M6 8.500l3 4h3" /><path d="M10.500 3h2.500v3h-2.500ZM11.500 11h2.500v3h-2.500Z" /><circle cx="2" cy="9" r="1.300" fill="currentColor" /></S></Cell>
      <Cell $w={22}><svg width="13" height="9" viewBox="0 0 13 9"><path d="M3 8.500Q0 8.500 0 6t2.500-2.700Q4 0 7 .4q2.500.4 3 2.800Q13 3.500 13 6t-2.500 2.500Z" fill="#0f6cbd" /><path d="M2 7.800L8 4q3-1.500 5 2 0 2.500-2.500 2.500H3Z" fill="#28a8ea" /></svg></Cell>
      <Stack $w={28}><Plain $size={9} $ls={-.3}>ENG</Plain><Plain $size={9} $ls={-.3}>IN</Plain></Stack>
      <Cell $w={28}><S w={13} sw={1.200}><path d="M1 6q7-7 14 0M3.500 8.500q4.500-4 9 0M6 11q2-2 4 0" /><circle cx="8" cy="13" r="1" fill="currentColor" /></S></Cell>
      <Cell $w={8}><S w={12} sw={1.200}><path d="M1 6h3l4-4v12l-4-4H1ZM10.500 5.500q1.500 2.500 0 5M13 3.500q2.500 4.500 0 9" /></S></Cell>
      <Cell $w={28}><S w={13} sw={1.300}><rect x=".800" y="4" width="12.500" height="8" rx="1.500" /><path d="M3 6h4v4H3Z" fill="currentColor" /><path d="M15.200 7v2" /></S></Cell>
      <Stack $w={51.500} $align="flex-end"><Plain $size={8.700} $ls={-.3}>15:44</Plain><Plain $size={9} $ls={-.05}>22-04-2023</Plain></Stack>
      <Count>23</Count>
      <Cell $w={14} />
    </Taskbar>
  );
}

export default function App() {
  return (
    <Screen>
      <GlobalStyle />
      <BrowserTop />
      <Middle>
        <Viewport>
          <AppHeader />
          <DealSummary />
          <Columns>
            <SideMenu />
            <Handle><Dot /><Dot /><Dot /></Handle>
            <ProfitLoss />
          </Columns>
          <NotesTab><S w={13} sw={1.200}><g stroke="#a69382"><path d="M2 2h9l3 3v9H2Z" /><path d="M4.500 8h5M4.500 11h7" /></g></S></NotesTab>
          <Watermarks>{Array.from({ length: 12 }, (_, i) => <WatermarkCell key={i} />)}</Watermarks>
          <Confirmation />
        </Viewport>
        <Scroll>
          <svg width="6" height="4" viewBox="0 0 6 4"><path d="M3 0L6 4H0Z" fill="#888" /></svg>
          <Thumb />
          <Spring />
          <svg width="6" height="4" viewBox="0 0 6 4"><path d="M0 0h6L3 4Z" fill="#555" /></svg>
        </Scroll>
        <SideRail>
          <RailItem $h={35}><S w={13} sw={0}><circle cx="6" cy="6" r="4.500" fill="#b6dcf5" stroke="#667" strokeWidth="1.800" /><path d="M9.500 9.500l5 5" stroke="#b33be0" strokeWidth="3" /></S></RailItem>
          <RailItem $h={29}><svg width="14" height="14" viewBox="0 0 14 14" fill="none" strokeWidth="3.400"><path d="M7 2.300L3 4.500V9" stroke="#7b5bd6" /><path d="M3 7.500v2L7 12" stroke="#a86ae0" /><path d="M6 12l5-2.500V7" stroke="#2f6fd8" /><path d="M11 9V4.500L6 2" stroke="#4150b5" /></svg></RailItem>
          <RailItem $h={34}><Outlook s={13} /></RailItem>
          <RailItem $h={34}><LuPlus size={14} strokeWidth={1.700} /></RailItem>
          <Spring />
          <RailRule />
          <RailItem $h={35}><S w={12} sw={1.400}><rect x="1" y="1.500" width="14" height="13" rx="2.500" /><path d="M10.500 1.500v13" /></S></RailItem>
          <RailItem $h={31}><S w={14} sw={1.200}><path d="M6.700 1h2.600l.5 2 1.700 1 2-.6 1.300 2.300-1.500 1.400v1.800l1.500 1.400-1.300 2.300-2-.6-1.700 1-.5 2H6.700l-.5-2-1.700-1-2 .6-1.300-2.300 1.500-1.400V7.100L1.200 5.700l1.300-2.300 2 .6 1.700-1Z" /><circle cx="8" cy="8" r="1.700" /></S></RailItem>
        </SideRail>
      </Middle>
      <Tasks />
    </Screen>
  );
}
